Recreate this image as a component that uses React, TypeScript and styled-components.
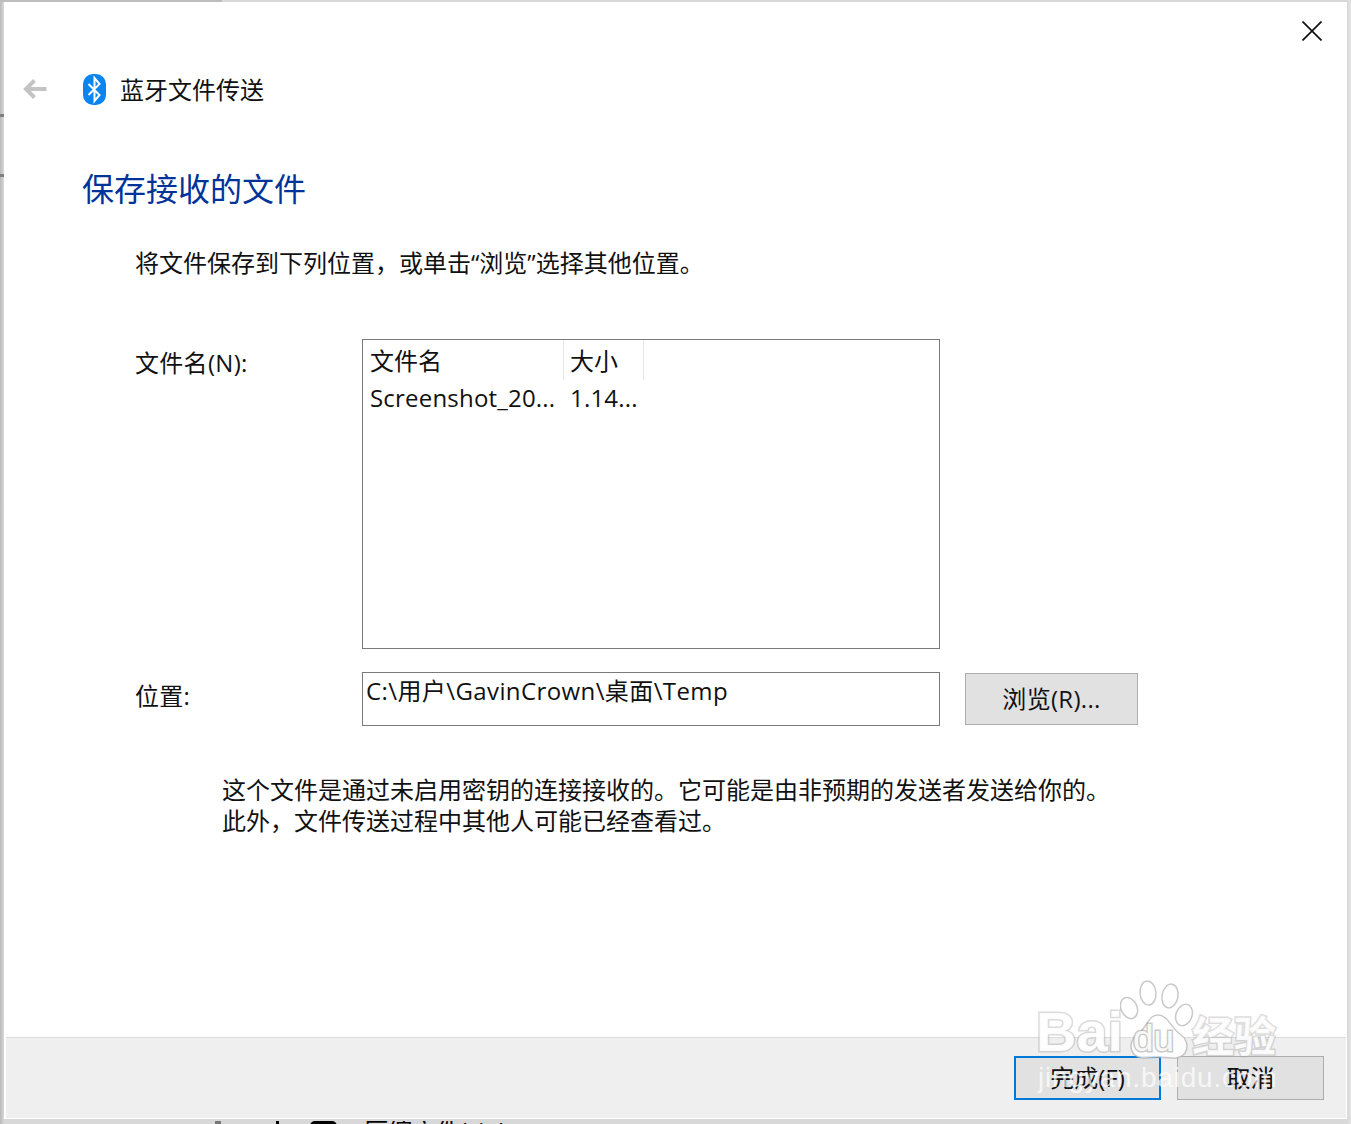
import React from "react";
import styled, { createGlobalStyle } from "styled-components";

const Global = createGlobalStyle`
  html, body { margin: 0; padding: 0; }
  body {
    background: #d4d4d4;
    font-family: "Open Sans", "Noto Sans CJK SC", sans-serif;
    color: #111;
    overflow: hidden;
  }
`;

const Page = styled.div`
  position: relative;
  width: 1351px;
  height: 1124px;
  padding: 2px 4px 0 4px;
  box-sizing: border-box;
  overflow: hidden;
  background: linear-gradient(90deg, #b9b9b9 0, #d8d8d8 4px, #d8d8d8 1347px, #e4e4e4 1351px);
`;

const TopStrip = styled.div`
  position: absolute;
  left: 0;
  top: 0;
  width: 222px;
  height: 2px;
  background: #bdbdbd;
`;

const EdgeMark = styled.div<{ $top: number }>`
  position: absolute;
  left: 0;
  top: ${(p) => p.$top}px;
  width: 4px;
  height: 3px;
  background: #808080;
`;

const Backdrop = styled.div`
  position: absolute;
  left: 215px;
  top: 1121px;
  width: 330px;
  height: 3px;
  overflow: hidden;
  display: flex;
  font-size: 24px;
  line-height: 20px;
  white-space: nowrap;
  color: #000;
`;

const BackdropTick = styled.span<{ $w: number; $c: string; $gap: number; $round?: boolean }>`
  flex: none;
  width: ${(p) => p.$w}px;
  height: 5px;
  margin-left: ${(p) => p.$gap}px;
  background: ${(p) => p.$c};
  border-radius: ${(p) => (p.$round ? "14px 14px 0 0" : "0")};
`;

const BackdropText = styled.span`
  margin-left: 27px;
`;

const Window = styled.div`
  position: relative;
  width: 1343px;
  height: 1117px;
  background: #fff;
  display: flex;
  flex-direction: column;
`;

const TopBar = styled.div`
  display: flex;
  justify-content: flex-end;
  height: 72px;
  padding: 19px 25px 0 0;
  box-sizing: border-box;
`;

const CloseButton = styled.div`
  width: 20px;
  height: 20px;
  line-height: 0;
`;

const NavRow = styled.div`
  display: flex;
  align-items: center;
  height: 30px;
  padding-left: 19px;
`;

const BackArrow = styled.div`
  width: 24px;
  height: 22px;
  line-height: 0;
  margin-right: 36px;
`;

const BtIcon = styled.div`
  width: 23px;
  height: 31px;
  line-height: 0;
  margin-right: 14px;
`;

const NavTitle = styled.div`
  font-size: 24px;
  line-height: 32px;
  margin-top: 2px;
  color: #111;
`;

const Heading = styled.h1`
  margin: 63px 0 0 78px;
  font-size: 32px;
  font-weight: 400;
  line-height: 44px;
  color: #003399;
`;

const Intro = styled.p`
  margin: 34px 0 0 131px;
  font-size: 24px;
  line-height: 36px;
  color: #111;
  white-space: nowrap;
`;

const Form = styled.div`
  display: grid;
  grid-template-columns: 227px 776px;
  grid-template-rows: 310px 54px;
  row-gap: 23px;
  margin: 58px 0 0 131px;
`;

const FieldLabel = styled.div`
  font-size: 24px;
  line-height: 32px;
  padding-top: 8px;
  letter-spacing: 0.3px;
  color: #111;
`;

const FileList = styled.div`
  width: 578px;
  box-sizing: border-box;
  border: 1px solid #7a7a7a;
  background: #fff;
`;

const ListRow = styled.div`
  display: grid;
  grid-template-columns: 201px 80px;
  height: 40px;
`;

const DataRow = styled(ListRow)`
  height: 36px;
`;

const ListCell = styled.div<{ $pad: number; $head?: boolean }>`
  padding-left: ${(p) => p.$pad}px;
  padding-top: ${(p) => (p.$head ? 3 : 0)}px;
  font-size: 24px;
  line-height: 36px;
  white-space: nowrap;
  letter-spacing: ${(p) => (p.$head ? 0 : 0.2)}px;
  color: #111;
  ${(p) => (p.$head ? "border-right: 1px solid #e5e5e5; box-sizing: border-box;" : "")}
`;

const PathRow = styled.div`
  display: flex;
`;

const PathField = styled.div`
  flex: none;
  width: 578px;
  height: 54px;
  box-sizing: border-box;
  border: 1px solid #7a7a7a;
  padding-left: 3px;
  font-size: 24px;
  line-height: 36px;
  letter-spacing: 0.4px;
  white-space: nowrap;
  color: #111;
`;

const SideButton = styled.div`
  margin: 1px 0 0 25px;
  width: 173px;
  height: 52px;
  box-sizing: border-box;
  background: #e1e1e1;
  border: 1px solid #adadad;
  font-size: 24px;
  line-height: 50px;
  letter-spacing: 0.3px;
  text-align: center;
  color: #111;
  flex: none;
`;

const Warning = styled.div`
  margin: 48px 0 0 218px;
  font-size: 24px;
  line-height: 31px;
  color: #111;
  white-space: nowrap;
`;

const Spacer = styled.div`
  flex: 1;
`;

const Footer = styled.div`
  height: 81px;
  margin: 0 1px 1px 2px;
  box-sizing: border-box;
  border-top: 1px solid #dcdcdc;
  background: #efefef;
  display: flex;
  justify-content: flex-end;
  gap: 16px;
  padding: 18px 22px 0 0;
`;

const FooterButton = styled.div<{ $primary?: boolean }>`
  width: 147px;
  height: 44px;
  box-sizing: border-box;
  background: #e1e1e1;
  border: ${(p) => (p.$primary ? "2px solid #0078d7" : "1px solid #adadad")};
  font-size: 24px;
  line-height: ${(p) => (p.$primary ? "40px" : "42px")};
  text-align: center;
  color: #111;
`;

const Watermark = styled.div`
  position: absolute;
  left: 1030px;
  top: 975px;
  width: 260px;
  height: 125px;
  pointer-events: none;
`;

const WmPaw = styled.div`
  position: absolute;
  left: 90px;
  top: 3px;
  width: 80px;
  height: 90px;
  line-height: 0;
`;

const WmBai = styled.div`
  position: absolute;
  left: 6px;
  top: 25px;
  font-family: "Liberation Sans", sans-serif;
  font-size: 56px;
  font-weight: 700;
  line-height: 64px;
  color: rgba(255, 255, 255, 0.9);
  -webkit-text-stroke: 3px rgba(165, 165, 165, 0.4);
  paint-order: stroke fill;
`;

const WmDu = styled.div`
  position: absolute;
  left: 103px;
  top: 44px;
  font-family: "Liberation Sans", sans-serif;
  font-size: 37px;
  line-height: 40px;
  color: rgba(255, 255, 255, 0.9);
  -webkit-text-stroke: 3px rgba(150, 150, 150, 0.5);
  paint-order: stroke fill;
`;

const WmJing = styled.div`
  position: absolute;
  left: 162px;
  top: 34px;
  font-family: "Noto Sans CJK SC", sans-serif;
  font-size: 42px;
  line-height: 50px;
  font-weight: 700;
  color: rgba(255, 255, 255, 0.9);
  -webkit-text-stroke: 3px rgba(165, 165, 165, 0.4);
  paint-order: stroke fill;
`;

const WmUrl = styled.div`
  position: absolute;
  left: 8px;
  top: 86px;
  font-family: "Liberation Sans", sans-serif;
  font-size: 28px;
  line-height: 34px;
  letter-spacing: 0.8px;
  white-space: nowrap;
  color: rgba(255, 255, 255, 0.72);
`;

export default function App() {
  return (
    <Page>
      <Global />
      <TopStrip />
      <EdgeMark $top={114} />
      <EdgeMark $top={174} />
      <Backdrop>
        <BackdropTick $gap={0} $w={6} $c="#777" />
        <BackdropTick $gap={55} $w={3} $c="#000" />
        <BackdropTick $gap={31} $w={27} $c="#000" $round />
        <BackdropText>压缩文件(zip)</BackdropText>
      </Backdrop>
      <Window>
        <TopBar>
          <CloseButton>
            <svg width="20" height="20" viewBox="0 0 20 20">
              <path d="M0.5 0.5 L19.5 19.5 M19.5 0.5 L0.5 19.5" stroke="#111" strokeWidth="1.7" fill="none" />
            </svg>
          </CloseButton>
        </TopBar>
        <NavRow>
          <BackArrow>
            <svg width="24" height="22" viewBox="0 0 24 22">
              <path d="M23.5 11 H3.5 M11.5 2.5 L3 11 L11.5 19.5" stroke="#c4c4c4" strokeWidth="4" fill="none" />
            </svg>
          </BackArrow>
          <BtIcon>
            <svg width="23" height="31" viewBox="0 0 23 31">
              <rect x="0" y="0" width="23" height="31" rx="10" fill="#0a84f0" />
              <path d="M5.5 10 L16.5 21 L11.5 27 V4 L16.5 10 L5.5 21" stroke="#fff" strokeWidth="2" fill="none" />
            </svg>
          </BtIcon>
          <NavTitle>蓝牙文件传送</NavTitle>
        </NavRow>
        <Heading>保存接收的文件</Heading>
        <Intro>将文件保存到下列位置，或单击“浏览”选择其他位置。</Intro>
        <Form>
          <FieldLabel>文件名(N):</FieldLabel>
          <FileList>
            <ListRow>
              <ListCell $pad={7} $head>文件名</ListCell>
              <ListCell $pad={6} $head>大小</ListCell>
            </ListRow>
            <DataRow>
              <ListCell $pad={7}>Screenshot_20...</ListCell>
              <ListCell $pad={6}>1.14...</ListCell>
            </DataRow>
          </FileList>
          <FieldLabel>位置:</FieldLabel>
          <PathRow>
            <PathField>C:\用户\GavinCrown\桌面\Temp</PathField>
            <SideButton>浏览(R)...</SideButton>
          </PathRow>
        </Form>
        <Warning>
          这个文件是通过未启用密钥的连接接收的。它可能是由非预期的发送者发送给你的。
          <br />
          此外，文件传送过程中其他人可能已经查看过。
        </Warning>
        <Spacer />
        <Footer>
          <FooterButton $primary>完成(F)</FooterButton>
          <FooterButton>取消</FooterButton>
        </Footer>
      </Window>
      <Watermark>
        <WmPaw>
          <svg width="80" height="90" viewBox="0 0 80 90">
            <g fill="rgba(255,255,255,0.85)" stroke="rgba(165,165,165,0.6)" strokeWidth="1.5">
              <ellipse cx="9" cy="30" rx="8" ry="11" transform="rotate(-25 9 30)" />
              <ellipse cx="28" cy="15" rx="8" ry="12" transform="rotate(-5 28 15)" />
              <ellipse cx="50" cy="18" rx="8" ry="12" transform="rotate(10 50 18)" />
              <ellipse cx="64" cy="37" rx="8" ry="11" transform="rotate(20 64 37)" />
              <path d="M38 37 C48 37 51 50 60 56 C72 64 68 82 52 80 C44 79 34 79 26 80 C10 82 6 64 18 56 C27 50 28 37 38 37 Z" />
            </g>
          </svg>
        </WmPaw>
        <WmBai>Bai</WmBai>
        <WmDu>du</WmDu>
        <WmJing>经验</WmJing>
        <WmUrl>jingyan.baidu.com</WmUrl>
      </Watermark>
    </Page>
  );
}
